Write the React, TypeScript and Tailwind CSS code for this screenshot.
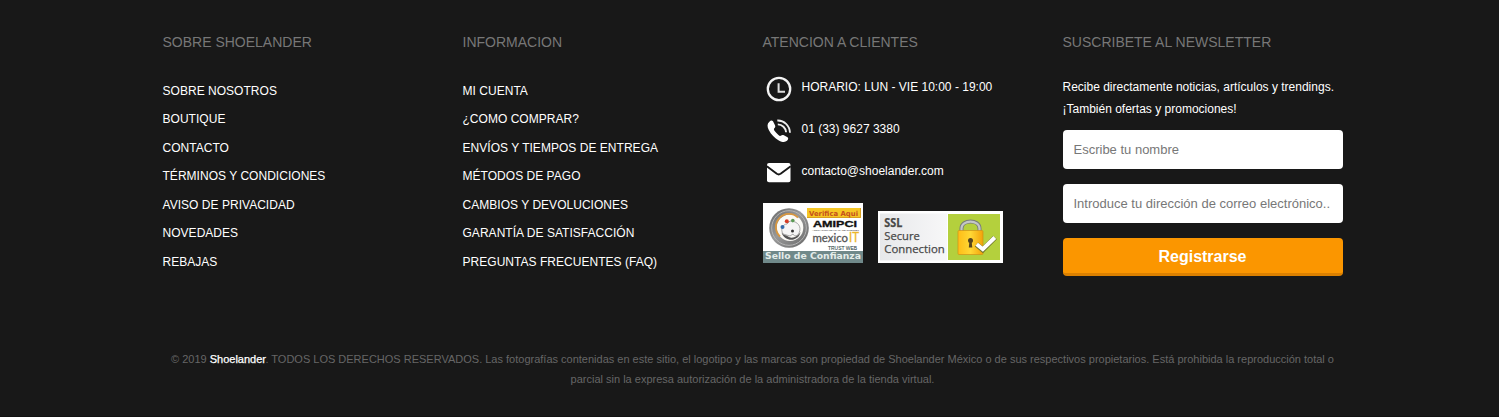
import React from "react";

const about = [
  "SOBRE NOSOTROS",
  "BOUTIQUE",
  "CONTACTO",
  "TÉRMINOS Y CONDICIONES",
  "AVISO DE PRIVACIDAD",
  "NOVEDADES",
  "REBAJAS",
];

const info = [
  "MI CUENTA",
  "¿COMO COMPRAR?",
  "ENVÍOS Y TIEMPOS DE ENTREGA",
  "MÉTODOS DE PAGO",
  "CAMBIOS Y DEVOLUCIONES",
  "GARANTÍA DE SATISFACCIÓN",
  "PREGUNTAS FRECUENTES (FAQ)",
];

function Heading({ children }: { children: React.ReactNode }) {
  return <h3 className="h-5 whitespace-nowrap text-[14px] leading-5 text-[#777777]">{children}</h3>;
}

function LinkColumn({ title, items }: { title: string; items: string[] }) {
  return (
    <section>
      <Heading>{title}</Heading>
      <ul className="mt-[25px]">
        {items.map((item) => (
          <li key={item} className="h-[28.45px] whitespace-nowrap leading-[28.45px] tracking-[0.03px]">
            <a href="#">{item}</a>
          </li>
        ))}
      </ul>
    </section>
  );
}

function ClockIcon() {
  return (
    <svg width="28" height="28" viewBox="0 0 28 28" fill="none">
      <circle cx="14" cy="14" r="11.2" stroke="#f4f4f4" strokeWidth="2.3" />
      <path d="M13.6 8.2V16.8H20" stroke="#dedede" strokeWidth="2" />
    </svg>
  );
}

function PhoneIcon() {
  return (
    <svg width="28" height="28" viewBox="0 0 28 28" fill="none">
      <path
        d="M4.4 4.8C5.6 3.4 7 3.2 8 4.3L10 8.2C10.6 9.5 10.3 10.3 9.1 11.4C8.6 12.3 9.1 13.4 11.2 15.8C13.3 18.1 14.5 19.2 15.7 18.8C16.9 17.8 17.8 17.6 18.9 18.3L22.5 20.3C23.6 21.2 23.4 22.5 22 23.8C20.1 25.5 17.4 25.3 13.8 23.4C9.8 21.4 6 17.4 3.8 13C2 9.4 2.1 6.8 4.4 4.8Z"
        fill="#fff"
      />
      <path d="M12.3 3.5C19.1 3.2 24.7 8.5 25 15.8" stroke="#eee" strokeWidth="1.8" />
      <path d="M12.8 7.4C17.2 7.4 20.8 10.9 21.1 15.3" stroke="#eee" strokeWidth="1.9" />
    </svg>
  );
}

function MailIcon() {
  return (
    <svg width="28" height="28" viewBox="0 0 28 28" fill="none">
      <rect x="2" y="4" width="23.5" height="19.2" rx="2" fill="#fff" />
      <path d="M1.8 7.2L11.8 14.8Q13.7 16.1 15.6 14.8L25.7 7.2" stroke="#181818" strokeWidth="1.9" />
    </svg>
  );
}

function TrustSeal() {
  return (
    <svg width="100" height="60" viewBox="0 0 100 60">
      <defs>
        <linearGradient id="ring" x2="1" y2="1">
          <stop stopColor="#666" />
          <stop offset=".45" stopColor="#999" />
          <stop offset="1" stopColor="#666" />
        </linearGradient>
      </defs>
      <rect width="100" height="60" fill="#fff" />
      <rect y="48" width="100" height="12" fill="#70898a" />
      <circle cx="26" cy="25" r="19.8" fill="url(#ring)" />
      <circle cx="26" cy="25" r="17.3" fill="none" stroke="#b5b5b5" strokeWidth="1" />
      <circle cx="27" cy="24.7" r="13.3" fill="#fbfaf6" />
      <path d="M17 33.5A13 13 0 0 1 35 14.5" fill="none" stroke="#d8973f" strokeWidth="1.8" />
      <path d="M20 31C17 26 20 21 24 21L27 18C35 18 39 24 36 30C35 33 31 34 30 31L27 33Z" fill="#f5f5f5" stroke="#888" strokeWidth=".7" />
      <path d="M18.5 29.5C21 33 24 32 26 34C30 36 35 33 37.5 29C36 38.5 22 40 18.5 29.5Z" fill="#555" />
      <circle cx="23.8" cy="18.3" r="2" fill="#d53c26" />
      <circle cx="29.8" cy="17.6" r="1.8" fill="#5b9a55" />
      <circle cx="19.5" cy="24" r="2" fill="#346cac" />
      <circle cx="29.5" cy="28" r="1.5" fill="#333" />
      <rect x="44" y="5" width="54" height="10" fill="#f6c725" />
      <path d="M44 14.5H97.5V5" fill="none" stroke="#d8a020" />
      <text x="46" y="12.5" textLength="49" lengthAdjust="spacingAndGlyphs" fontFamily="DejaVu Sans, sans-serif" fontSize="7" fontWeight="bold" fill="#c4501d">Verifica Aqui</text>
      <text x="50" y="24" textLength="44" lengthAdjust="spacingAndGlyphs" fontFamily="Liberation Sans, sans-serif" fontSize="9.5" fontWeight="bold" fill="#111" stroke="#111" strokeWidth=".35">AMIPCI</text>
      <text x="49" y="27.5" textLength="47" lengthAdjust="spacingAndGlyphs" fontFamily="Liberation Sans, sans-serif" fontSize="2.5" fill="#333">ASOCIACION MEXICANA DE INTERNET</text>
      <text x="49.5" y="39.3" textLength="35.5" lengthAdjust="spacingAndGlyphs" fontFamily="Lato, sans-serif" fontSize="12" fill="#555" stroke="#555" strokeWidth=".3">mexico</text>
      <text x="86" y="39.3" textLength="10" lengthAdjust="spacingAndGlyphs" fontFamily="Lato, sans-serif" fontSize="13" fill="#ecb629" stroke="#ecb629" strokeWidth=".3">IT</text>
      <text x="65" y="46.5" textLength="29" lengthAdjust="spacingAndGlyphs" fontFamily="Liberation Sans, sans-serif" fontSize="5.5" fill="#354b4b" stroke="#354b4b" strokeWidth=".1">TRUST WEB</text>
      <text x="2" y="56.2" textLength="96" lengthAdjust="spacingAndGlyphs" fontFamily="DejaVu Sans, sans-serif" fontSize="9.3" fontWeight="bold" fill="#e4ece9">Sello de Confianza</text>
    </svg>
  );
}

function SslSeal() {
  return (
    <svg width="125" height="52" viewBox="0 0 125 52">
      <defs>
        <linearGradient id="lock" x2="1">
          <stop stopColor="#ffbd16" />
          <stop offset=".5" stopColor="#ffd735" />
          <stop offset="1" stopColor="#f2a20a" />
        </linearGradient>
        <linearGradient id="paper" x2="1">
          <stop stopColor="#e7e8ea" />
          <stop offset="1" stopColor="#f7f7f8" />
        </linearGradient>
      </defs>
      <rect width="125" height="52" fill="#fff" />
      <rect x="2" y="2.5" width="67" height="47" fill="url(#paper)" />
      <rect x="70" y="3" width="52" height="46" fill="#b4d03d" />
      <g fontFamily="Open Sans, Noto Sans, sans-serif" fontSize="11.5" fill="#484848" stroke="#484848" strokeWidth=".25">
        <text x="6.3" y="16" textLength="18" lengthAdjust="spacingAndGlyphs" fontWeight="bold">SSL</text>
        <text x="6.3" y="29" textLength="35.5" lengthAdjust="spacingAndGlyphs">Secure</text>
        <text x="6.3" y="42" textLength="60.5" lengthAdjust="spacingAndGlyphs">Connection</text>
      </g>
      <path d="M83.5 21V17.5C83.5 8 101.5 8 101.5 17.5V21" fill="none" stroke="#777b7b" strokeWidth="4" />
      <path d="M83.5 21V17.5C83.5 8.3 101.5 8.3 101.5 17.5V21" fill="none" stroke="#c3c7c7" strokeWidth="2.2" />
      <rect x="80" y="19.5" width="25" height="24" rx="1" fill="url(#lock)" stroke="#d09215" strokeWidth=".7" />
      <circle cx="92.5" cy="29.5" r="2.5" fill="#55431e" />
      <path d="M91.5 29H93.5L94.3 36.5H90.8Z" fill="#55431e" />
      <path d="M98.5 33.5L104.8 38.8L117 26.5" fill="none" stroke="#71772e" strokeWidth="5.2" />
      <path d="M98.7 33.3L104.8 38.2L116.8 26.5" fill="none" stroke="#fff" strokeWidth="4" />
    </svg>
  );
}

function ContactRow({ icon, children }: { icon: React.ReactNode; children: React.ReactNode }) {
  return (
    <div className="flex h-[42px] items-start gap-[9px] pl-[2px]">
      {icon}
      <span className="whitespace-nowrap pt-[1px] leading-[22px]">{children}</span>
    </div>
  );
}

export default function App() {
  return (
    <footer className="h-[417px] w-[1499px] overflow-hidden border-b border-[#111111] bg-[#181818] pl-[162.5px] pt-8 font-['Liberation_Sans',Arial,sans-serif] text-[12px] text-white">
      <div className="grid h-[318px] w-[1180px] grid-cols-4 gap-5">
        <LinkColumn title="SOBRE SHOELANDER" items={about} />
        <LinkColumn title="INFORMACION" items={info} />
        <section>
          <Heading>ATENCION A CLIENTES</Heading>
          <div className="mt-[23px]">
            <ContactRow icon={<ClockIcon />}>HORARIO: LUN - VIE 10:00 - 19:00</ContactRow>
            <ContactRow icon={<PhoneIcon />}>01 (33) 9627 3380</ContactRow>
            <ContactRow icon={<MailIcon />}>contacto@shoelander.com</ContactRow>
          </div>
          <div className="mt-[2px] flex items-end gap-[15px]">
            <TrustSeal />
            <SslSeal />
          </div>
        </section>
        <section>
          <Heading>SUSCRIBETE AL NEWSLETTER</Heading>
          <p className="mt-[25px] h-[53px] whitespace-nowrap leading-[21.5px]">
            Recibe directamente noticias, artículos y trendings.
            <br />
            ¡También ofertas y promociones!
          </p>
          <form className="flex flex-col">
            <input className="h-[39px] w-full rounded-[4px] bg-white px-[11px] text-[13px] text-[#333] placeholder:text-[#777777]" placeholder="Escribe tu nombre" />
            <input className="mt-[15px] h-[39px] w-full rounded-[4px] bg-white px-[11px] text-[13px] text-[#333] placeholder:text-[#777777]" placeholder="Introduce tu dirección de correo electrónico.." />
            <button type="button" className="mt-[15px] h-[38px] w-full rounded-[4px] border-b-[3px] border-[#db8000] bg-[#fb9600] pt-[3px] text-[16px] font-bold">Registrarse</button>
          </form>
        </section>
      </div>
      <p className="w-[1180px] whitespace-nowrap text-center text-[11px] leading-[19.5px] text-[#666666]">
        © 2019 <a href="#" className="text-white [-webkit-text-stroke:0.25px_white]">Shoelander</a>. TODOS LOS DERECHOS RESERVADOS. Las fotografías contenidas en este sitio, el logotipo y las marcas son propiedad de Shoelander México o de sus respectivos propietarios. Está prohibida la reproducción total o
        <br />
        parcial sin la expresa autorización de la administradora de la tienda virtual.
      </p>
    </footer>
  );
}
